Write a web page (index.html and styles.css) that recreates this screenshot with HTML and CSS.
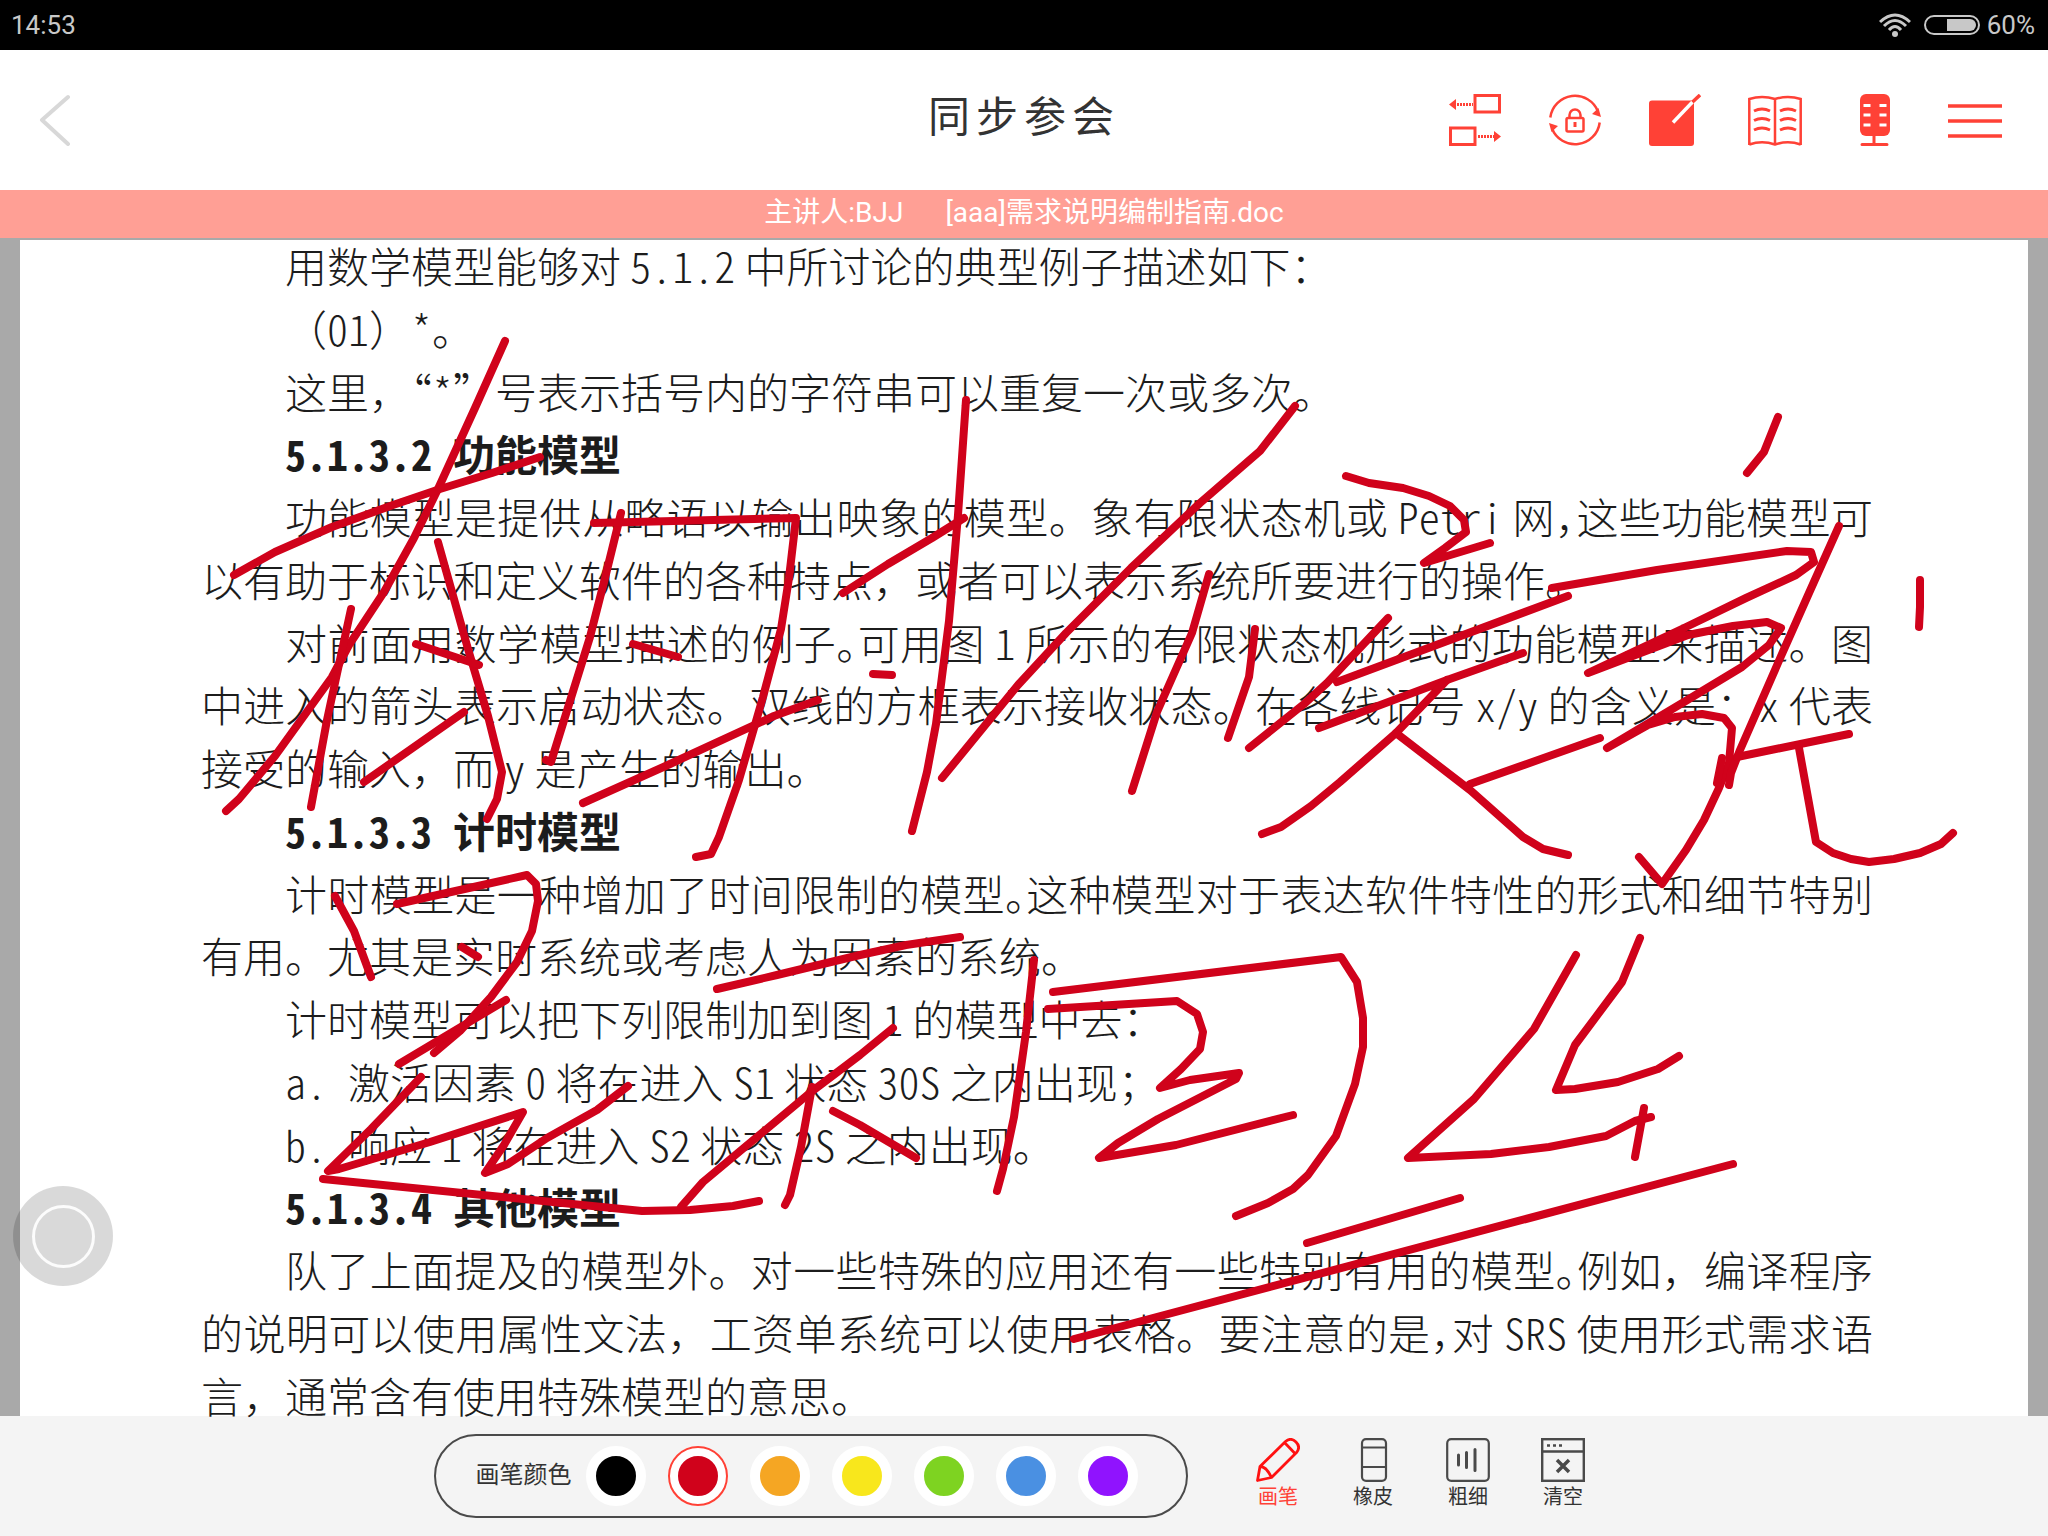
FILE: index.html
```html
<!DOCTYPE html>
<html lang="zh-CN">
<head>
<meta charset="utf-8">
<meta name="viewport" content="width=device-width, initial-scale=1">
<title>同步参会</title>
<link rel="stylesheet" href="styles.css">
</head>
<body>
<div class="status-bar">
  <span class="clock">14:53</span>
  <div class="status-right">
    <svg class="wifi" viewBox="0 0 32 24" aria-hidden="true">
      <g fill="none" stroke="currentColor" stroke-width="3">
        <path d="M1 9Q16-5 31 9"/>
        <path d="M5 13Q16 2 27 13"/>
        <path d="M10 17Q16 10 22 17"/>
      </g>
      <circle cx="16" cy="21" r="3" fill="currentColor"/>
    </svg>
    <svg class="battery" viewBox="0 0 56 20" aria-hidden="true">
      <rect x="1" y="1" width="54" height="18" rx="9" fill="none" stroke="currentColor" stroke-width="2"/>
      <path d="M23 4H46a6 6 0 0 1 0 12H23Z" fill="currentColor"/>
    </svg>
    <span>60%</span>
  </div>
</div>

<header class="header">
  <button class="back" type="button" aria-label="返回">
    <svg viewBox="0 0 32 52" aria-hidden="true"><path d="M29 3L3 26L29 50" fill="none" stroke="currentColor" stroke-width="4" stroke-linecap="round" stroke-linejoin="round"/></svg>
  </button>
  <h1 class="title">同步参会</h1>
  <nav class="actions">
    <button type="button" aria-label="切换">
      <svg class="icon" viewBox="0 0 52 52" aria-hidden="true">
        <g fill="none" stroke="currentColor" stroke-width="3">
          <rect x="26" y="1.500" width="24.500" height="16.500"/>
          <rect x="1.500" y="34" width="24.500" height="16.500"/>
          <path d="M8 10.500H24M29 42.500H45" stroke-dasharray="2 1"/>
        </g>
        <path d="M0 10.500L7 5V16ZM52 42.500L45 37V48Z" fill="currentColor"/>
      </svg>
    </button>
    <button type="button" aria-label="同步锁定">
      <svg class="icon" viewBox="0 0 52 52" aria-hidden="true">
        <g fill="none" stroke="currentColor" stroke-width="2.500">
          <path d="M1.300 23.500A24.800 24.800 0 0 1 49 17.500M50.700 28.500A24.800 24.800 0 0 1 3 34.500"/>
          <rect x="17.500" y="24" width="17" height="13.500" rx="1.500"/>
          <path d="M20.500 24V21a5.500 5.500 0 0 1 11 0v3"/>
          <path d="M26 28v5" stroke-width="3"/>
        </g>
        <path d="M43 20L49.500 14L52 23ZM9 32L2.500 38L0 29Z" fill="currentColor"/>
      </svg>
    </button>
    <button type="button" aria-label="批注">
      <svg class="icon" viewBox="0 0 52 52" aria-hidden="true">
        <rect y="6.500" width="45" height="45.500" rx="3" fill="currentColor"/>
        <path d="M24 28.500L43.500 8" stroke="#fff" stroke-width="3.500"/>
        <path d="M43.500 8L51 1" stroke="currentColor" stroke-width="3.500"/>
      </svg>
    </button>
    <button type="button" aria-label="文档">
      <svg class="icon wide" viewBox="0 0 54 52" aria-hidden="true">
        <g fill="none" stroke="currentColor" stroke-width="2.500">
          <path d="M1.300 51V5Q14 1 27 5Q40 1 52.700 5V51M27 5V51M1.300 50.500Q14 46 27 50.500Q40 46 52.700 50.500"/>
          <path d="M6 17Q14 13 22 17M6 26.500Q14 22.500 22 26.500M6 36Q14 32 22 36M32 17Q40 13 48 17M32 26.500Q40 22.500 48 26.500M32 36Q40 32 48 36" stroke-width="3"/>
        </g>
      </svg>
    </button>
    <button type="button" aria-label="麦克风">
      <svg class="icon" viewBox="0 0 52 52" aria-hidden="true">
        <rect x="11" width="30" height="42" rx="6" fill="currentColor"/>
        <path d="M14.500 11.500h7M30.500 11.500h7M14.500 21h7M30.500 21h7M14.500 31h7M30.500 31h7" stroke="#fff" stroke-width="3"/>
        <path d="M25 42V50M13 50.500H38" stroke="currentColor" stroke-width="3" stroke-linecap="round"/>
      </svg>
    </button>
    <button type="button" aria-label="菜单">
      <svg class="icon wide" viewBox="0 0 54 52" aria-hidden="true"><path d="M0 12H54M0 27H54M0 42H54" stroke="currentColor" stroke-width="3.500"/></svg>
    </button>
  </nav>
</header>

<div class="banner"><span>主讲人:BJJ</span><span>[aaa]需求说明编制指南.doc</span></div>

<main class="stage">
  <article class="page">
    <p><span class="line indent">用数学模型能够对 <span class="half">5.1.2</span> 中所讨论的典型例子描述如下：</span></p>
    <p><span class="line indent">（<span class="half">01</span>）<span class="half">*</span>。</span></p>
    <p><span class="line indent">这里，<span class="tight">“</span><span class="half">*</span>”号表示括号内的字符串可以重复一次或多次。</span></p>
    <h2 class="line indent"><span class="half">5.1.3.2 </span>功能模型</h2>
    <p>
      <span class="line indent full">功能模型是提供从略语以输出映象的模型。象有限状态机或 <span class="half">Petri</span> 网<span class="tight">，</span>这些功能模型可</span>
      <span class="line">以有助于标识和定义软件的各种特点，或者可以表示系统所要进行的操作。</span>
    </p>
    <p>
      <span class="line indent full">对前面用数学模型描述的例子<span class="tight">。</span>可用图 <span class="half">1</span> 所示的有限状态机形式的功能模型来描述。图</span>
      <span class="line full">中进入的箭头表示启动状态。双线的方框表示接收状态。在各线记号 <span class="half">x/y</span> 的含义是：<span class="half">x</span> 代表</span>
      <span class="line">接受的输入，而 <span class="half">y</span> 是产生的输出。</span>
    </p>
    <h2 class="line indent"><span class="half">5.1.3.3 </span>计时模型</h2>
    <p>
      <span class="line indent full">计时模型是一种增加了时间限制的模型<span class="tight">。</span>这种模型对于表达软件特性的形式和细节特别</span>
      <span class="line">有用。尤其是实时系统或考虑人为因素的系统。</span>
    </p>
    <p><span class="line indent">计时模型可以把下列限制加到图 <span class="half">1</span> 的模型中去：</span></p>
    <p><span class="line indent"><span class="half">a. </span>激活因素 <span class="half">0</span> 将在进入 <span class="half">S1</span> 状态 <span class="half">30S</span> 之内出现；</span></p>
    <p><span class="line indent"><span class="half">b. </span>响应 <span class="half">1</span> 将在进入 <span class="half">S2</span> 状态 <span class="half">2S</span> 之内出现。</span></p>
    <h2 class="line indent"><span class="half">5.1.3.4 </span>其他模型</h2>
    <p>
      <span class="line indent full">队了上面提及的模型外。对一些特殊的应用还有一些特别有用的模型<span class="tight">。</span>例如，编译程序</span>
      <span class="line full">的说明可以使用属性文法，工资单系统可以使用表格。要注意的是<span class="tight">，</span>对 <span class="half">SRS</span> 使用形式需求语</span>
      <span class="line">言，通常含有使用特殊模型的意思。</span>
    </p>
  </article>

  <svg class="ink" viewBox="0 238 2048 1178" preserveAspectRatio="xMidYMin meet" aria-hidden="true">
    <polyline points="505,341 475,408 438,489 414,538 384,592 349,645 332,677 275,756 239,799 226,811"/>
    <polyline points="234,575 275,552 332,527 393,505 440,489 492,473 540,457"/>
    <polyline points="438,542 468,649 488,716 502,772 497,799 487,819"/>
    <polyline points="351,609 338,669 327,720 311,807"/>
    <polyline points="416,644 479,665"/>
    <polyline points="364,782 464,712"/>
    <polyline points="621,513 605,578 590,637 551,762 546,760"/>
    <polyline points="594,523 796,518 789,578 781,629 763,697 739,780 719,837 711,854 696,857"/>
    <polyline points="633,644 678,657"/>
    <polyline points="583,803 670,764 774,716 818,700"/>
    <polyline points="966,400 958,515 949,621 936,724 927,772 912,831"/>
    <polyline points="843,593 888,564 932,538 964,518"/>
    <polyline points="1295,406 1260,451 1200,503 1131,568 1066,633 1018,685 942,778"/>
    <polyline points="1209,574 1192,633 1157,712 1132,791"/>
    <polyline points="1255,629 1249,677 1228,738"/>
    <polyline points="873,674 892,675"/>
    <polyline points="1388,618 1327,683 1304,704 1249,748"/>
    <polyline points="1346,476 1369,483 1403,488 1429,496 1450,506 1464,520 1466,532 1445,548 1424,563 1490,543"/>
    <polyline points="1778,417 1764,452 1747,473"/>
    <polyline points="1552,588 1657,570 1787,551 1811,552 1814,562 1796,575 1746,598 1684,628 1588,673 1688,635 1733,626 1767,622 1781,628 1769,645 1742,667 1684,702 1607,748 1648,725 1675,717 1702,714 1724,718 1732,728 1729,763 1719,788 1704,820 1686,850 1662,884 1639,857"/>
    <polyline points="1722,758 1717,783"/>
    <polyline points="1839,526 1809,593 1778,663 1740,750 1731,773 1729,785"/>
    <polyline points="1737,757 1849,734"/>
    <polyline points="1799,748 1816,842 1833,853 1851,859 1869,862 1894,859 1920,853 1941,844 1953,833"/>
    <polyline points="1920,580 1920,607 1919,627"/>
    <polyline points="1568,596 1337,682"/>
    <polyline points="1523,653 1447,680 1319,728"/>
    <polyline points="1447,680 1396,733 1340,782 1311,806 1281,827 1262,834"/>
    <polyline points="1396,733 1470,790 1523,837 1543,849 1568,855"/>
    <polyline points="1470,784 1600,738"/>
    <polyline points="335,896 354,931 371,977"/>
    <polyline points="397,904 469,888 527,875 536,884 538,901 532,931 517,962 491,997 460,1031 434,1053"/>
    <polyline points="462,947 478,957"/>
    <polyline points="506,1000 399,1064"/>
    <polyline points="421,1077 371,1129 328,1171 339,1169 430,1142 523,1112 504,1145 485,1173 508,1164 547,1138 597,1110 628,1086"/>
    <polyline points="323,1179 642,1211 690,1210 733,1206 759,1201"/>
    <polyline points="717,989 777,975 860,955 906,945 960,937"/>
    <polyline points="893,1028 860,1055 811,1092 703,1182 681,1207"/>
    <polyline points="812,1087 801,1147 790,1195 785,1205"/>
    <polyline points="833,1111 860,1125 916,1158"/>
    <polyline points="1034,960 1026,1032 1014,1117 1003,1169 997,1191"/>
    <polyline points="1053,992 1341,957 1357,982 1363,1018 1363,1047 1355,1084 1336,1136 1308,1175 1293,1189 1268,1203 1236,1216"/>
    <polyline points="1048,1009 1177,1001 1197,1014 1203,1032 1200,1049 1181,1069 1160,1088 1190,1080 1239,1073 1236,1079 1158,1119 1118,1143 1099,1158 1176,1145 1293,1115"/>
    <polyline points="1576,955 1534,1029 1474,1099 1408,1158 1491,1154 1549,1147 1606,1136 1635,1121 1651,1117"/>
    <polyline points="1640,938 1622,982 1575,1045 1556,1090 1575,1089 1618,1082 1658,1069 1679,1056"/>
    <polyline points="1644,1108 1635,1157"/>
    <polyline points="1307,1243 1460,1198"/>
    <polyline points="1074,1339 1733,1164"/>
  </svg>

  <button class="assist" type="button" aria-label="悬浮球"></button>
</main>

<footer class="toolbar">
  <fieldset class="palette">
    <span class="palette-label">画笔颜色</span>
    <input class="swatch black" type="radio" name="color" aria-label="黑色">
    <input class="swatch red" type="radio" name="color" aria-label="红色" checked>
    <input class="swatch orange" type="radio" name="color" aria-label="橙色">
    <input class="swatch yellow" type="radio" name="color" aria-label="黄色">
    <input class="swatch green" type="radio" name="color" aria-label="绿色">
    <input class="swatch blue" type="radio" name="color" aria-label="蓝色">
    <input class="swatch purple" type="radio" name="color" aria-label="紫色">
  </fieldset>
  <div class="tools">
    <button class="tool active" type="button">
      <svg viewBox="0 0 44 44" aria-hidden="true"><path d="M1.500 42.500L4 28.500L29.500 3.500Q35-1 40 4Q45 9 40.500 14.500L15.500 39.500ZM4 28.500Q10 28 15.500 39.500M28.500 4.500L39 15.500" fill="none" stroke="#f11" stroke-width="2.800" stroke-linejoin="round"/></svg>
      <span>画笔</span>
    </button>
    <button class="tool" type="button">
      <svg viewBox="0 0 44 44" aria-hidden="true"><g fill="none" stroke="currentColor" stroke-width="2.200"><rect x="11" y="1.200" width="24" height="41.600" rx="4"/><path d="M11 9.500H35M11 29H35"/></g></svg>
      <span>橡皮</span>
    </button>
    <button class="tool" type="button">
      <svg viewBox="0 0 44 44" aria-hidden="true"><g fill="none" stroke="currentColor" stroke-width="2.200"><rect x="1.200" y="1.200" width="41.600" height="41.600" rx="4"/><path d="M12.500 17V27M20.500 14.500V29.500M29 11.500V32.500" stroke-width="3" stroke-linecap="round"/></g></svg>
      <span>粗细</span>
    </button>
    <button class="tool" type="button">
      <svg viewBox="0 0 44 44" aria-hidden="true"><g fill="none" stroke="currentColor" stroke-width="2.400"><rect x="1.200" y="1.200" width="41.600" height="41.600"/><path d="M1 13.500H43"/><path d="M6 7.500h3M12 7.500h3M18 7.500h3"/><path d="M16 22L28 34M28 22L16 34" stroke-width="3.500"/></g></svg>
      <span>清空</span>
    </button>
  </div>
</footer>
</body>
</html>
```
FILE: styles.css
```css
* {
  box-sizing: border-box;
}

body {
  margin: 0;
  min-height: 100vh;
  display: flex;
  flex-direction: column;
  background: #fff;
  color: #333;
  font-family: Roboto, "Noto Sans CJK SC", sans-serif;
}

button {
  padding: 0;
  border: 0;
  background: none;
  font: inherit;
  color: inherit;
}

/* System status bar */
.status-bar {
  display: flex;
  align-items: center;
  justify-content: space-between;
  height: 50px;
  padding: 0 13px 0 11px;
  background: #000;
  color: #c8c8c8;
  font-size: 26px;
}

.status-right {
  display: flex;
  align-items: center;
}

.wifi {
  width: 32px;
  height: 24px;
  margin-right: 13px;
}

.battery {
  width: 56px;
  height: 20px;
  margin-right: 7px;
}

/* Title bar */
.header {
  display: grid;
  grid-template-columns: 1fr auto 1fr;
  align-items: center;
  height: 140px;
  padding: 0 23px;
}

.back {
  justify-self: start;
  padding-left: 16px;
  color: #d8d8d8;
}

.back svg {
  display: block;
  width: 32px;
  height: 52px;
}

.title {
  margin: 0;
  padding-bottom: 4px;
  font-size: 42px;
  font-weight: 400;
  line-height: 60px;
  letter-spacing: 6px;
}

.actions {
  display: flex;
  justify-self: end;
  color: #ff4136;
}

.actions button {
  display: grid;
  place-items: center;
  width: 100px;
  height: 100px;
}

.icon {
  width: 52px;
  height: 52px;
}

.icon.wide {
  width: 54px;
}

.banner {
  display: flex;
  justify-content: center;
  gap: 42px;
  height: 48px;
  background: #ff9f95;
  color: #fff;
  font-size: 28px;
  line-height: 46px;
}

/* Shared document */
.stage {
  position: relative;
  display: flex;
  flex: 1;
  padding: 2px 20px 0;
  background: #a9a9a9;
}

.page {
  display: flex;
  flex: 1;
  flex-direction: column;
  justify-content: space-between;
  padding: 7px 155px 3px 181px;
  background: #fff;
  color: #1c1c1c;
  font-family: "Noto Sans CJK SC", sans-serif;
  font-size: 42px;
  font-weight: 300;
  line-height: 36px;
}

.page p {
  display: contents;
}

.line {
  display: block;
  margin: 0;
  white-space: nowrap;
}

.indent {
  padding-left: 84px;
}

.full {
  text-align: justify;
  text-align-last: justify;
}

h2.line {
  font-size: 42px;
  font-weight: 700;
}

.half {
  font-feature-settings: "hwid";
  white-space: pre;
}

.tight {
  font-feature-settings: "halt";
}

.ink {
  position: absolute;
  inset: 0;
  width: 100%;
  height: 100%;
  fill: none;
  stroke: #d0021b;
  stroke-width: 8px;
  stroke-linecap: round;
  stroke-linejoin: round;
}

.assist {
  position: absolute;
  left: 13px;
  bottom: 130px;
  display: grid;
  place-items: center;
  width: 100px;
  height: 100px;
  border-radius: 50%;
  background: rgba(0, 0, 0, 0.15);
}

.assist::before {
  content: "";
  width: 57px;
  height: 57px;
  border: 3px solid rgba(255, 255, 255, 0.9);
  border-radius: 50%;
}

/* Drawing tools */
.toolbar {
  display: flex;
  align-items: center;
  justify-content: center;
  gap: 43px;
  height: 120px;
  padding-right: 4px;
  background: #f4f4f4;
}

.palette {
  display: flex;
  align-items: center;
  gap: 22px;
  height: 84px;
  margin: 0;
  padding: 0 48px 0 40px;
  border: 2px solid #4a4a4a;
  border-radius: 42px;
}

.palette-label {
  margin-right: -8px;
  padding-bottom: 8px;
  font-size: 24px;
}

.swatch {
  appearance: none;
  width: 60px;
  height: 60px;
  margin: 0;
  border: 10px solid #fff;
  border-radius: 50%;
}

.swatch:checked {
  outline: 2px solid #ff4136;
  outline-offset: -2px;
}

.black { background: #000; }
.red { background: #d0021b; }
.orange { background: #f5a623; }
.yellow { background: #f8e71c; }
.green { background: #7ed321; }
.blue { background: #4a90e2; }
.purple { background: #9013fe; }

.tools {
  display: flex;
  padding-bottom: 3px;
}

.tool {
  display: flex;
  flex-direction: column;
  align-items: center;
  gap: 1px;
  width: 95px;
  font-size: 20px;
  line-height: 28px;
}

.tool svg {
  width: 44px;
  height: 44px;
  color: #4a4a4a;
}

.tool.active {
  color: #ff4136;
}
```
